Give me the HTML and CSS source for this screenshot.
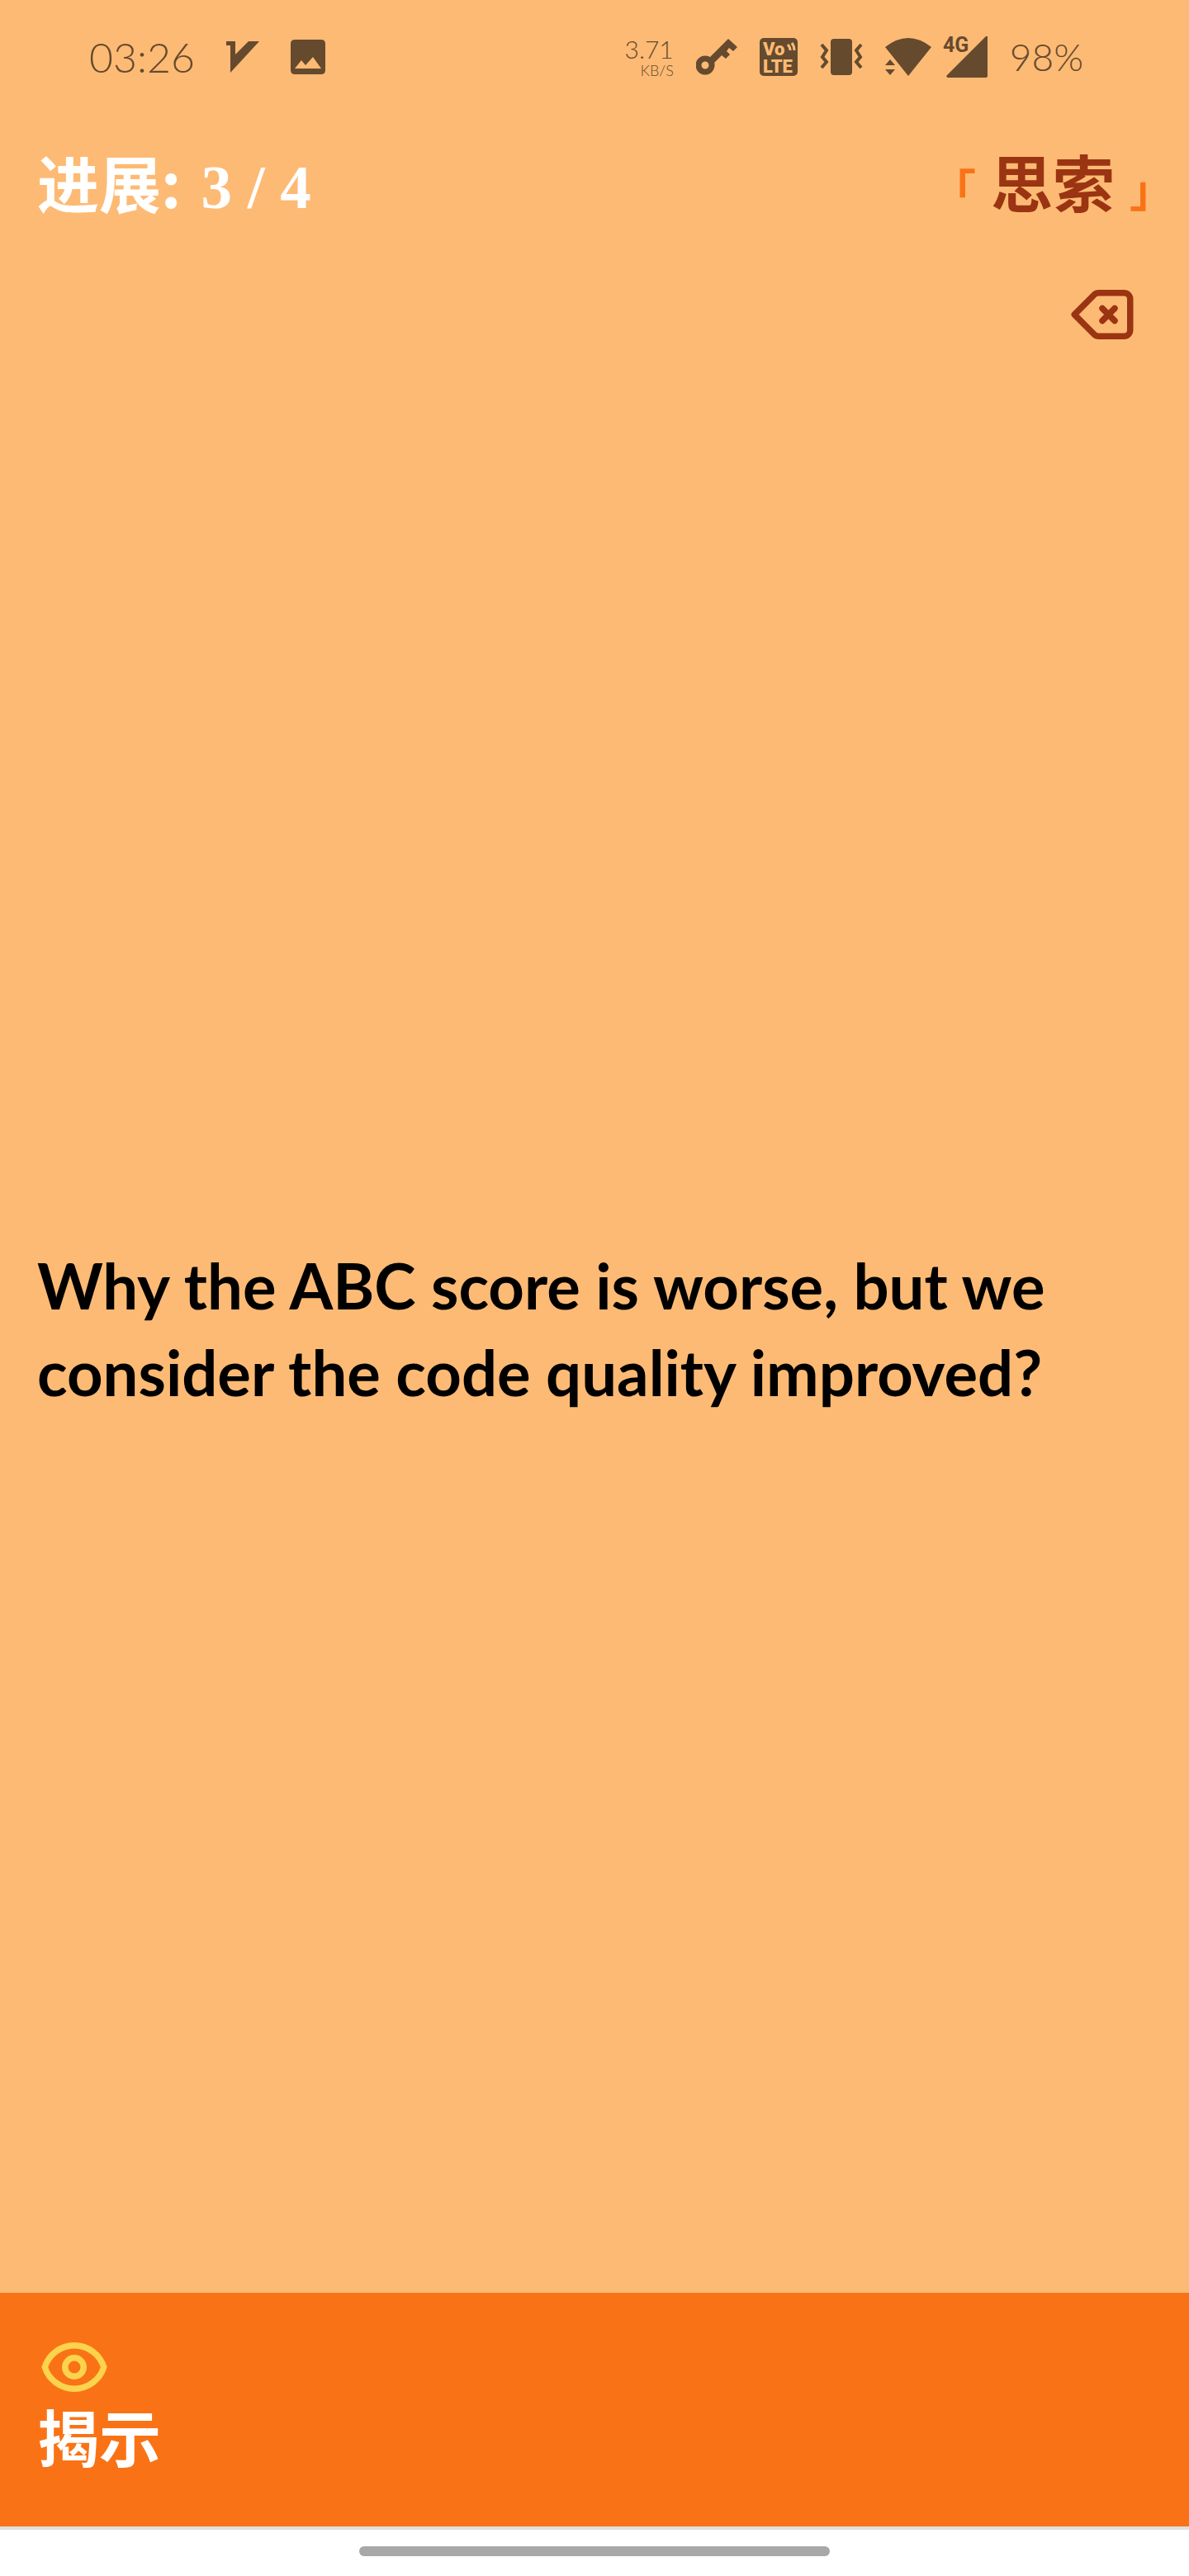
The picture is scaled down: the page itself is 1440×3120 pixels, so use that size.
FILE: index.html
```html
<!DOCTYPE html>
<html lang="zh-CN">
<head>
<meta charset="utf-8">
<meta name="viewport" content="width=device-width, initial-scale=1">
<title>思索</title>
<link rel="stylesheet" href="styles.css">
</head>
<body>
<div class="screen">
  <div class="status">
    <div class="status-group status-left">
      <span class="status-text">03:26</span>
      <svg width="40" height="38" viewBox="0 0 40 38" fill="currentColor" aria-hidden="true"><path d="M0 0H11V16L27 0H40L5 38V5H0z"/></svg>
      <svg width="42" height="42" viewBox="0 0 42 42" fill="currentColor" aria-hidden="true"><path fill-rule="evenodd" d="M5 0H37Q42 0 42 5V37Q42 42 37 42H5Q0 42 0 37V5Q0 0 5 0zM5 35H37L27 21L18 31L13 25z"/></svg>
    </div>
    <div class="status-group">
      <div class="speed"><span class="speed-value">3.71</span><span class="speed-unit">KB/S</span></div>
      <svg width="50" height="44" viewBox="0 0 50 44" aria-hidden="true"><circle cx="11" cy="32" r="8" fill="none" stroke="currentColor" stroke-width="7"/><path fill="currentColor" d="M15 24L39 0L50 10L45 15L40 11L37 15L41 19L36 24L31 20L21 30z"/></svg>
      <svg class="badge" width="46" height="58" viewBox="0 -6 46 58" role="img" aria-label="VoLTE"><rect width="46" height="46" rx="5" fill="currentColor"/><text class="cut" x="4" y="21" font-size="22">Vo</text><text class="cut" x="4" y="42" font-size="22">LTE</text><path d="M34 8Q37 11 37 15M39 6Q42 10 42 15" fill="none" class="cut-line"/></svg>
      <svg width="52" height="44" viewBox="0 0 52 44" aria-hidden="true"><rect x="13" width="26" height="44" rx="4" fill="currentColor"/><path d="M2 7L8 14L3 22L8 28L2 35M50 7L44 14L49 22L44 28L50 35" fill="none" stroke="currentColor" stroke-width="4"/></svg>
      <div class="network">
        <svg width="56" height="46" viewBox="0 0 56 46" fill="currentColor" aria-hidden="true"><path d="M0 11Q28 -11 56 11L28 46zM0 33L6 26L12 33zM0 38H12L6 45z"/></svg>
        <svg class="badge" width="54" height="62" viewBox="0 -6 54 62" role="img" aria-label="4G"><path fill="currentColor" d="M52 0H54V48Q54 50 52 50H6Q3 49 5 47z"/><text x="0" y="19" font-size="25" fill="currentColor">4G</text></svg>
      </div>
      <span class="status-text battery">98%</span>
    </div>
  </div>

  <header class="header">
    <p class="progress"><span>进展:</span> <span class="count">3 / 4</span></p>
    <h1 class="mode"><span class="bracket">｢</span>思索<span class="bracket">｣</span></h1>
  </header>
  <div class="tools">
    <button class="icon-button" type="button" aria-label="删除">
      <svg width="90" height="90" viewBox="0 0 24 24" fill="none" stroke="currentColor" stroke-width="2" stroke-linecap="round" stroke-linejoin="round"><path d="M12 14l2-2m0 0l2-2m-2 2l-2-2m2 2l2 2M3 12l6.414 6.414a2 2 0 001.414.586H19a2 2 0 002-2V7a2 2 0 00-2-2h-8.172a2 2 0 00-1.414.586L3 12z"/></svg>
    </button>
  </div>

  <main class="card">
    <p class="question">Why the ABC score is worse, but we consider the code quality improved?</p>
  </main>

  <button class="reveal" type="button">
    <svg class="eye" width="90" height="90" viewBox="0 0 24 24" fill="none" stroke="currentColor" stroke-width="2" stroke-linecap="round" stroke-linejoin="round" aria-hidden="true"><path d="M15 12a3 3 0 11-6 0 3 3 0 016 0z"/><path d="M2.458 12C3.732 7.943 7.523 5 12 5c4.478 0 8.268 2.943 9.542 7-1.274 4.057-5.064 7-9.542 7-4.477 0-8.268-2.943-9.542-7z"/></svg>
    <span>揭示</span>
  </button>
  <div class="gesture"><div class="pill"></div></div>
</div>
</body>
</html>
```
FILE: styles.css
```css
* { box-sizing: border-box; }

body {
  margin: 0;
  background: #fdba74;
  font-family: "Lato", "Noto Sans CJK SC", sans-serif;
}

p, h1 { margin: 0; }

button {
  border: 0;
  background: none;
  font: inherit;
  cursor: pointer;
}

svg { display: block; flex: none; }

.screen {
  display: flex;
  flex-direction: column;
  min-height: 100vh;
}

/* Phone status bar */
.status {
  display: flex;
  justify-content: space-between;
  align-items: center;
  height: 138px;
  padding: 0 128px 0 108px;
  color: #654a2e;
}

.status-group {
  display: flex;
  align-items: center;
  gap: 27px;
}

.status-left { gap: 38px; }

.status-text {
  font-size: 50px;
  font-weight: 300;
  line-height: 60px;
}

.battery { font-size: 46px; }

.speed {
  display: flex;
  flex-direction: column;
  align-items: flex-end;
  font-weight: 300;
}

.speed-value { font-size: 30px; line-height: 32px; }
.speed-unit { font-size: 18px; line-height: 20px; }

.network {
  display: flex;
  align-items: center;
  gap: 14px;
}

.badge {
  font-family: "Roboto", sans-serif;
  font-weight: 700;
}

.cut { fill: #fdba74; font-weight: 900; }
.cut-line { stroke: #fdba74; stroke-width: 3; }

/* Card header */
.header {
  display: flex;
  justify-content: space-between;
  align-items: center;
  height: 183px;
  padding: 0 45px 14px;
  font-family: "Noto Sans CJK SC", sans-serif;
  font-size: 75px;
  font-weight: 700;
  line-height: 105px;
}

.progress {
  display: flex;
  align-items: baseline;
  gap: 24px;
  color: #fff;
}

.count { font-family: "Liberation Serif", serif; }

.mode {
  display: flex;
  align-items: baseline;
  gap: 18px;
  color: #9a3412;
  font-size: 75px;
}

.bracket {
  font-size: 54px;
  color: #f97316;
}

.tools {
  display: flex;
  justify-content: flex-end;
  padding: 0 45px;
}

.icon-button {
  padding: 15px;
  color: #9a3412;
}

/* Question */
.card {
  display: flex;
  flex: 1;
  align-items: center;
  padding: 0 45px;
}

.question {
  font-size: 76px;
  font-weight: 700;
  line-height: 105px;
  color: #000;
}

/* Reveal button */
.reveal {
  display: flex;
  flex-direction: column;
  align-items: flex-start;
  padding: 45px 45px 73px;
  background: #f97316;
  color: #fff;
  font-family: "Noto Sans CJK SC", sans-serif;
  font-size: 75px;
  font-weight: 700;
  line-height: 75px;
}

.eye { color: #fcd34d; }

/* System gesture bar */
.gesture {
  display: flex;
  justify-content: center;
  height: 60px;
  padding-top: 20px;
  border-top: 4px solid #e0e0e0;
  background: #fff;
}

.pill {
  width: 570px;
  height: 12px;
  border-radius: 6px;
  background: #a8a8a8;
}
```
